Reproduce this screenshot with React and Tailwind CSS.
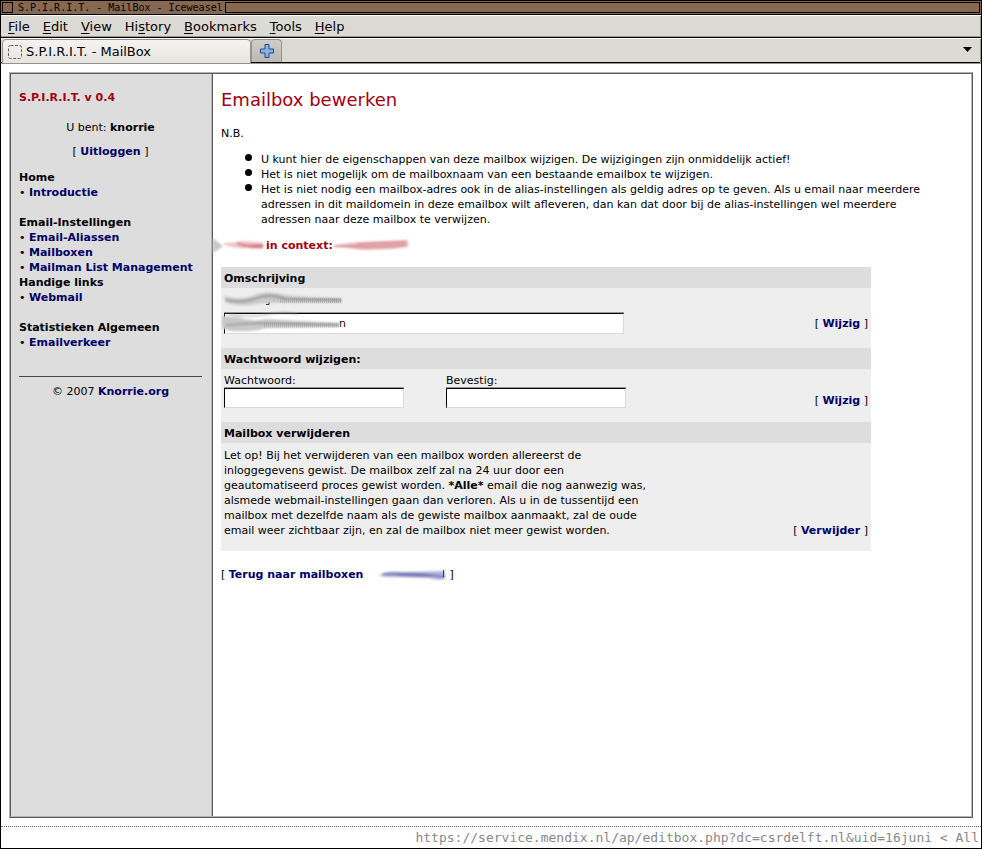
const menus = [
  ['', 'F', 'ile'],
  ['', 'E', 'dit'],
  ['', 'V', 'iew'],
  ['Hi', 's', 'tory'],
  ['', 'B', 'ookmarks'],
  ['', 'T', 'ools'],
  ['', 'H', 'elp'],
];

const navigation = [
  { title: 'Home', links: ['Introductie'], spaced: true },
  {
    title: 'Email-Instellingen',
    links: ['Email-Aliassen', 'Mailboxen', 'Mailman List Management'],
    spaced: false,
  },
  { title: 'Handige links', links: ['Webmail'], spaced: true },
  { title: 'Statistieken Algemeen', links: ['Emailverkeer'], spaced: false },
];

const notes = [
  <>U kunt hier de eigenschappen van deze mailbox wijzigen. De wijzigingen zijn onmiddelijk actief!</>,
  <>Het is niet mogelijk om de mailboxnaam van een bestaande emailbox te wijzigen.</>,
  <>
    Het is niet nodig een mailbox-adres ook in de alias-instellingen als geldig adres op te geven. Als u email naar meerdere
    <br />
    adressen in dit maildomein in deze emailbox wilt afleveren, dan kan dat door bij de alias-instellingen wel meerdere
    <br />
    adressen naar deze mailbox te verwijzen.
  </>,
];

const fieldStyle =
  'block w-full border border-t-black border-r-[#dcdad5] border-b-[#dcdad5] border-l-black bg-white shadow-[0_-1px_0_#9a998e]';

function Link({ children }) {
  return (
    <a href="#" className="font-bold text-[#000066]">
      {children}
    </a>
  );
}

function Action({ children }) {
  return (
    <span className="whitespace-nowrap">
      [ <Link>{children}</Link> ]
    </span>
  );
}

function TitleBar() {
  return (
    <div className="flex h-[15px] items-stretch border-y border-black bg-[#85684f] p-px">
      <button type="button" aria-label="Venstermenu" className="w-[11px] border border-black" />
      <span className="pr-0.5 pl-[5px] font-['DejaVu_Sans_Mono',monospace] text-[10px] leading-[11px] whitespace-nowrap">
        S.P.I.R.I.T. - MailBox - Iceweasel
      </span>
      <div className="flex-1 border border-black" />
    </div>
  );
}

function MenuBar() {
  return (
    <nav className="flex h-[23px] items-center gap-[13px] border-t border-b border-t-white border-b-black bg-[#dcdad5] pl-[7px] text-[13px] shadow-[inset_-1px_-1px_0_#9a998e]">
      {menus.map(([before, key, after]) => (
        <button key={key + after} type="button" className="leading-5">
          {before}
          <span className="underline underline-offset-2">{key}</span>
          {after}
        </button>
      ))}
    </nav>
  );
}

function TabBar() {
  return (
    <div className="flex h-[26px] items-stretch border-t border-white bg-[#dcdad5] pl-px shadow-[inset_-1px_-1px_0_#9a998e,inset_0_-2px_0_#000]">
      <button
        type="button"
        className="flex w-[249px] items-center gap-1 rounded-t border border-[#94938b] bg-linear-to-b from-[#f4f3f1] to-[#e6e5e1] pl-[5px] text-[13px]"
      >
        <svg width="14" height="14" viewBox="0 0 14 14" fill="none" stroke="#66665f" aria-hidden="true">
          <rect x="0.5" y="0.5" width="13" height="13" rx="2" strokeDasharray="3 1.5" />
        </svg>
        S.P.I.R.I.T. - MailBox
      </button>
      <button
        type="button"
        aria-label="Nieuw tabblad"
        className="mb-[2px] flex w-[31px] items-center justify-center rounded-t border border-b-0 border-[#94938b] bg-linear-to-b from-[#cfcdc8] to-[#bbb9b3]"
      >
        <svg width="14" height="14" viewBox="0 0 14 14" aria-hidden="true">
          <path d="M5 .5h4v4.500h4.500v4H9v4.500H5V9H.5V5H5z" fill="#8ab2e2" stroke="#204a87" />
        </svg>
      </button>
      <button type="button" aria-label="Alle tabbladen" className="mr-[9px] mb-1 ml-auto">
        <svg width="9" height="5" viewBox="0 0 9 5" aria-hidden="true">
          <path d="M0 0h9L4.500 5z" />
        </svg>
      </button>
    </div>
  );
}

function Sidebar() {
  return (
    <aside className="w-[202px] shrink-0 border-r border-[#5a5a5a] bg-[#dddddd]">
      <div className="h-full border-r border-[#b4b4b4] pt-4 pr-[9px] pl-2">
        <h2 className="font-bold text-[#a0000f]">S.P.I.R.I.T. v 0.4</h2>
        <p className="mt-[15px] text-center">
          U bent: <b>knorrie</b>
        </p>
        <p className="mt-[9px] mb-[11px] text-center">
          <Action>Uitloggen</Action>
        </p>
        {navigation.map((group) => (
          <section key={group.title} className={group.spaced ? 'mb-[15px]' : ''}>
            <h3 className="font-bold">{group.title}</h3>
            <ul>
              {group.links.map((link) => (
                <li key={link} className="whitespace-nowrap">
                  • <Link>{link}</Link>
                </li>
              ))}
            </ul>
          </section>
        ))}
        <hr className="mt-[26px] border-[#444444]" />
        <p className="mt-[7px] text-center">
          © 2007 <Link>Knorrie.org</Link>
        </p>
      </div>
    </aside>
  );
}

function ContextHeading() {
  return (
    <h2 className="mt-[11px] -ml-2 flex items-center font-bold text-[#a0000f]">
      <svg width="53" height="15" viewBox="0 0 53 15" className="overflow-visible" aria-hidden="true">
        <defs>
          <filter id="soft" x="-20%" y="-50%" width="140%" height="200%">
            <feGaussianBlur stdDeviation="0.9" />
          </filter>
        </defs>
        <g filter="url(#soft)">
          <path d="M0 0l6 5 4 3-4 3-6 4z" fill="#c8c8c8" />
          <path d="M10 5q10 0 20-2 10 0 21 2l-1 6q-10 0-18-1-8 1-20-3z" fill="#efc6c9" />
          <path d="M24 5q8 4 26 4M30 8l20-1" stroke="#d27a82" strokeWidth="2" fill="none" />
        </g>
      </svg>
      in context:
      <svg width="76" height="15" viewBox="0 0 76 15" className="overflow-visible" aria-hidden="true">
        <g filter="url(#soft)">
          <path d="M0 8q12-4 52-5l22-1q3 4 0 7l-14 2-30 1Q12 9 0 9z" fill="#e9b4b8" />
          <path d="M2 8q30 2 71-1M24 6l48-2" stroke="#cf6f76" fill="none" />
        </g>
      </svg>
    </h2>
  );
}

function LabelSmudge() {
  return (
    <svg width="120" height="15" viewBox="0 0 120 15" className="block overflow-visible" aria-hidden="true">
      <g filter="url(#soft)">
        <path d="M0 4q15 4 28 0 14-7 34-1 28 3 56 3v5H62q-20-1-34 2Q12 15 1 10z" fill="#cbcbcb" />
        <path d="M2 8q18 4 34-3 14-3 26 2l55 1" fill="none" stroke="#999999" strokeWidth="2" />
      </g>
      <path d="M42 2v6M46 1v7M50 3v7M54 3v7" stroke="#aaaaaa" opacity="0.5" />
      <path d="M56 8.500h62" stroke="#888888" strokeWidth="5" strokeDasharray="1 1" opacity="0.4" />
      <path d="M42 12.500h3v-2" fill="none" stroke="#333333" />
    </svg>
  );
}

function FieldSmudge() {
  return (
    <svg width="120" height="18" viewBox="0 0 120 18" className="block overflow-visible" aria-hidden="true">
      <g filter="url(#soft)">
        <path d="M-2 3l16 1q14 5 28 2l74 4v4l-74 1q-12 4-26 3-10 1-18-3z" fill="#c9c9c9" />
        <path d="M2 12q18-1 34-2l78 2" fill="none" stroke="#a0a0a0" strokeWidth="2" />
        <path d="M4 1q22 4 42 0 14-3 28 0" fill="none" stroke="#999999" />
      </g>
      <path d="M40 12h75" stroke="#888888" strokeWidth="5" strokeDasharray="1 1" opacity="0.35" />
    </svg>
  );
}

function Panel({ title, children }) {
  return (
    <section>
      <h3 className="bg-[#dddddd] px-[3px] pt-1 pb-0.5 font-bold">{title}</h3>
      {children}
    </section>
  );
}

function Settings() {
  return (
    <form className="mt-[14px] w-full max-w-[650px] bg-[#eeeeee]">
      <Panel title="Omschrijving">
        <div className="flex items-end justify-between px-[3px] pt-1 pb-[14px]">
          <div className="w-[400px]">
            <LabelSmudge />
            <div className="relative mt-1.5">
              <input
                aria-label="Omschrijving"
                defaultValue="n"
                className={fieldStyle + ' h-[21px] pl-[114px]'}
              />
              <div className="pointer-events-none absolute top-0 left-0">
                <FieldSmudge />
              </div>
            </div>
          </div>
          <div className="mb-[3px]">
            <Action>Wijzig</Action>
          </div>
        </div>
      </Panel>
      <Panel title="Wachtwoord wijzigen:">
        <div className="flex items-end justify-between px-[3px] pt-1 pb-[14px]">
          <div className="flex gap-[42px]">
            {['Wachtwoord:', 'Bevestig:'].map((label) => (
              <label key={label} className="block w-[180px]">
                {label}
                <input type="password" className={fieldStyle + ' h-5 px-1'} />
              </label>
            ))}
          </div>
          <Action>Wijzig</Action>
        </div>
      </Panel>
      <Panel title="Mailbox verwijderen">
        <div className="flex items-end justify-between px-[3px] pt-[5px] pb-[13px]">
          <p className="whitespace-nowrap">
            Let op! Bij het verwijderen van een mailbox worden allereerst de
            <br />
            inloggegevens gewist. De mailbox zelf zal na 24 uur door een
            <br />
            geautomatiseerd proces gewist worden. <b>*Alle*</b> email die nog aanwezig was,
            <br />
            alsmede webmail-instellingen gaan dan verloren. Als u in de tussentijd een
            <br />
            mailbox met dezelfde naam als de gewiste mailbox aanmaakt, zal de oude
            <br />
            email weer zichtbaar zijn, en zal de mailbox niet meer gewist worden.
          </p>
          <Action>Verwijder</Action>
        </div>
      </Panel>
    </form>
  );
}

function MainContent() {
  return (
    <main className="min-w-0 flex-1 bg-white px-2 pt-4">
      <h1 className="text-[18px] leading-5 text-[#a0000f]">Emailbox bewerken</h1>
      <p className="mt-4">N.B.</p>
      <ul className="mt-[11px] pl-6">
        {notes.map((note, index) => (
          <li key={index} className="flex gap-[9px] whitespace-nowrap">
            <span className="mt-0.5 size-[7px] shrink-0 rounded-full bg-black" />
            <span>{note}</span>
          </li>
        ))}
      </ul>
      <ContextHeading />
      <Settings />
      <p className="mt-4 flex items-center whitespace-pre">
        [ <Link>Terug naar mailboxen</Link>
        <svg width="86" height="15" viewBox="0 0 86 15" aria-hidden="true">
          <g filter="url(#soft)">
            <path d="M16 8q8-5 24-3l42-1v8q-8 2-16-1l-30-1q-15 1-20-2z" fill="#b4b4da" />
            <path d="M20 7q32-1 46 1l16 2M34 8l34 1" fill="none" stroke="#7777b8" strokeWidth="2" />
          </g>
          <path d="M80.500 3v7" stroke="#333388" />
        </svg>
        ]
      </p>
    </main>
  );
}

export default function App() {
  return (
    <div className="flex min-h-screen flex-col border-x border-b border-black bg-white font-['DejaVu_Sans',sans-serif] text-[11px] leading-[15px] text-black">
      <TitleBar />
      <MenuBar />
      <TabBar />
      <div className="flex flex-1 flex-col p-2">
        <div className="flex flex-1 flex-col border border-t-[#b4b4b4] border-r-[#5a5a5a] border-b-[#5a5a5a] border-l-[#b4b4b4]">
          <div className="flex flex-1 border border-t-[#5a5a5a] border-r-[#b4b4b4] border-b-[#b4b4b4] border-l-[#5a5a5a]">
            <Sidebar />
            <MainContent />
          </div>
        </div>
      </div>
      <footer className="h-[22px] border-t border-dotted border-[#66665f] pr-0.5 text-right font-['DejaVu_Sans_Mono',monospace] text-[13px] leading-[21px] text-[#888888]">
        https://service.mendix.nl/ap/editbox.php?dc=csrdelft.nl&amp;uid=16juni &lt; All
      </footer>
    </div>
  );
}
